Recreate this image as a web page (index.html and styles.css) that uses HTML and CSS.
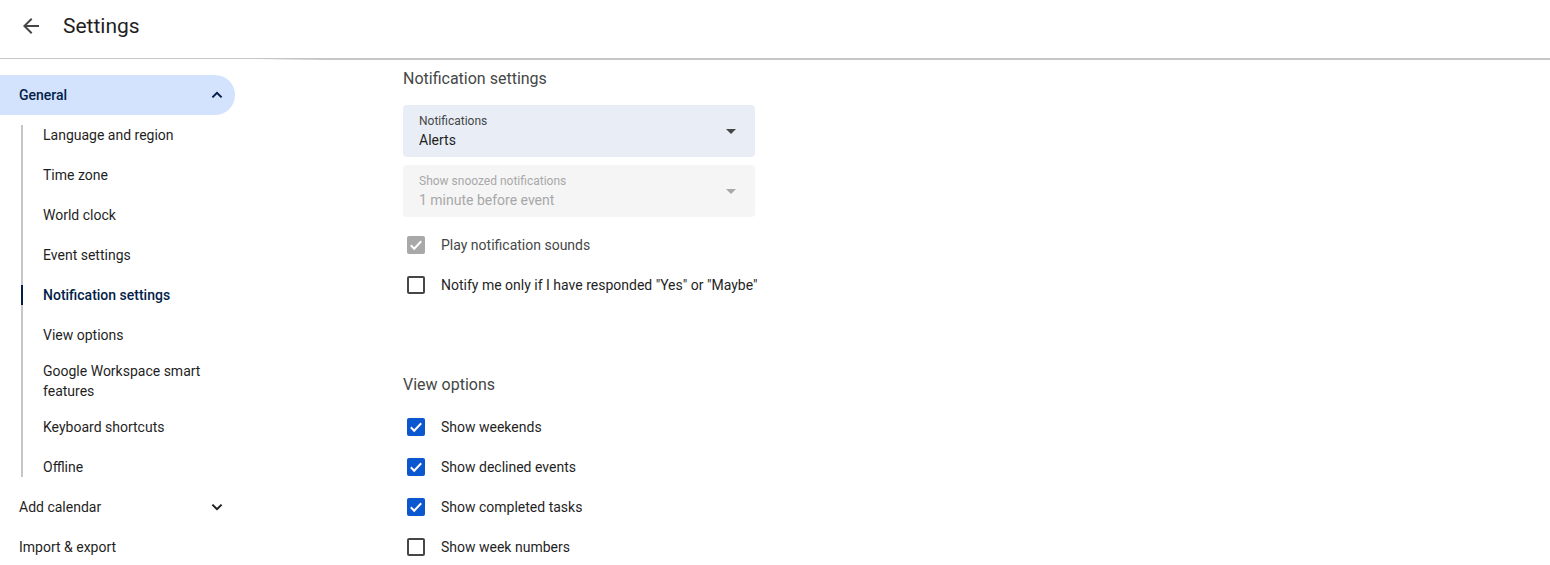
FILE: index.html
```html
<!DOCTYPE html>
<html lang="en">
	<head>
		<meta charset="UTF-8" />
		<meta name="viewport" content="width=device-width, initial-scale=1.0" />
		<title>Settings</title>
		<link rel="stylesheet" href="styles.css">
	</head>
	<body>
		<header class="topbar">
			<button class="back" type="button" aria-label="Go back">
				<svg viewBox="0 0 24 24" width="24" height="24"><path d="M20 11H7.83l5.59-5.59L12 4l-8 8 8 8 1.41-1.41L7.83 13H20v-2z"/></svg>
			</button>
			<h1>Settings</h1>
		</header>
		<div class="divider"></div>

		<div class="layout">
			<nav class="sidebar">
				<button class="section open" type="button" aria-expanded="true">
					General
					<svg viewBox="0 0 20 20" width="20" height="20"><path d="M5.4 12.4l4.6-4.6 4.6 4.6"/></svg>
				</button>
				<ul class="subnav">
					<li><a href="#language">Language and region</a></li>
					<li><a href="#timezone">Time zone</a></li>
					<li><a href="#worldclock">World clock</a></li>
					<li><a href="#events">Event settings</a></li>
					<li><a class="active" href="#notifications">Notification settings</a></li>
					<li><a href="#view">View options</a></li>
					<li><a href="#smart">Google Workspace smart features</a></li>
					<li><a href="#shortcuts">Keyboard shortcuts</a></li>
					<li><a href="#offline">Offline</a></li>
				</ul>
				<button class="section" type="button" aria-expanded="false">
					Add calendar
					<svg viewBox="0 0 20 20" width="20" height="20"><path d="M5.4 7.6l4.6 4.6 4.6-4.6"/></svg>
				</button>
				<a class="section" href="#import">Import &amp; export</a>
			</nav>

			<main class="content">
				<section class="group" id="notifications">
					<h2>Notification settings</h2>
					<div class="fields">
						<div class="field">
							<label for="notify">Notifications</label>
							<select id="notify">
								<option>Alerts</option>
							</select>
							<svg viewBox="0 0 10 5" width="10" height="5"><path d="M0 0h10L5 5z"/></svg>
						</div>
						<div class="field disabled">
							<label for="snooze">Show snoozed notifications</label>
							<select id="snooze" disabled>
								<option>1 minute before event</option>
							</select>
							<svg viewBox="0 0 10 5" width="10" height="5"><path d="M0 0h10L5 5z"/></svg>
						</div>
					</div>
					<label class="check"><input type="checkbox" checked disabled><span>Play notification sounds</span></label>
					<label class="check"><input type="checkbox"><span>Notify me only if I have responded "Yes" or "Maybe"</span></label>
				</section>

				<section class="group" id="view">
					<h2>View options</h2>
					<label class="check"><input type="checkbox" checked><span>Show weekends</span></label>
					<label class="check"><input type="checkbox" checked><span>Show declined events</span></label>
					<label class="check"><input type="checkbox" checked><span>Show completed tasks</span></label>
					<label class="check"><input type="checkbox"><span>Show week numbers</span></label>
				</section>
			</main>
		</div>
	</body>
</html>
```

FILE: styles.css
```css
* {
	box-sizing: border-box;
}
body {
	display: flex;
	flex-direction: column;
	height: 100vh;
	margin: 0;
	background-color: #fff;
	color: #1f1f1f;
	font-family: "Google Sans", Roboto, sans-serif;
	font-size: 14px;
	line-height: 20px;
}
button,
select {
	font: inherit;
	color: inherit;
	cursor: pointer;
}
a {
	color: inherit;
	text-decoration: none;
}

/* Top bar */
.topbar {
	display: flex;
	align-items: center;
	gap: 20px;
	padding: 10px 19px 16px;
}
.back {
	display: flex;
	padding: 0;
	border: none;
	background: none;
	fill: #444746;
}
h1 {
	margin: 0;
	font-size: 21px;
	font-weight: 400;
	line-height: 32px;
}
/* hairline that thickens over the content column */
.divider {
	flex: none;
	height: 2px;
	background:
		linear-gradient(#c4c7c5, #c4c7c5) top / 100% 1px no-repeat,
		linear-gradient(to right, transparent 255px, #c4c7c5 325px) bottom / 100% 1px no-repeat;
}

.layout {
	display: flex;
	flex: 1;
	min-height: 0;
}
.sidebar,
.content {
	overflow-y: auto;
	scrollbar-width: none;
}

/* Sidebar */
.sidebar {
	flex: none;
	width: 235px;
	padding-top: 15px;
}
.section {
	display: flex;
	align-items: center;
	justify-content: space-between;
	width: 100%;
	height: 40px;
	padding: 0 8px 0 19px;
	border: none;
	border-radius: 0 20px 20px 0;
	background: none;
}
.section svg {
	fill: none;
	stroke: currentColor;
	stroke-width: 2;
}
.section.open {
	background-color: #d3e3fd;
	color: #041e49;
	font-weight: 500;
}
.subnav {
	position: relative;
	margin: 0 0 0 21px;
	padding: 0;
	list-style: none;
}
.subnav::before {
	content: "";
	position: absolute;
	top: 10px;
	bottom: 10px;
	left: 0;
	width: 2px;
	background-color: #c4c7c5;
}
.subnav li {
	display: flex;
	align-items: center;
	min-height: 40px;
	padding: 6px 20px 6px 0;
}
.subnav a {
	position: relative;
	padding-left: 22px;
}
.subnav .active {
	color: #041e49;
	font-weight: 500;
}
.subnav .active::before {
	content: "";
	position: absolute;
	top: 0;
	bottom: 0;
	left: 0;
	width: 2px;
	background-color: #041e49;
}

/* Content */
.content {
	flex: 1;
	padding: 7px 24px 0 168px;
}
.group {
	margin-bottom: 68px;
}
.group:last-child {
	margin-bottom: 0;
}
h2 {
	margin: 0 0 10px;
	color: #444746;
	font-size: 16px;
	font-weight: 400;
	line-height: 24px;
}
.fields {
	display: flex;
	flex-direction: column;
	gap: 8px;
	max-width: 352px;
	padding: 4px 0 8px;
}
.field {
	position: relative;
	border-radius: 4px;
	background-color: #e9eef6;
	color: #1f1f1f;
}
.field label {
	position: absolute;
	top: 8px;
	left: 16px;
	color: #444746;
	font-size: 12px;
	line-height: 16px;
	pointer-events: none;
}
.field select {
	display: block;
	width: 100%;
	height: 52px;
	padding: 18px 40px 0 16px;
	border: none;
	appearance: none;
	background: none;
}
.field svg {
	position: absolute;
	top: 24px;
	right: 19px;
	fill: #444746;
	pointer-events: none;
}
.field.disabled {
	background-color: #f5f5f5;
}
.field.disabled label,
.field.disabled select {
	color: #a8a8a8;
	opacity: 1;
}
.field.disabled svg {
	fill: #a8a8a8;
}

/* Checkbox rows */
.check {
	display: flex;
	align-items: center;
	gap: 16px;
	width: fit-content;
	height: 40px;
	padding-left: 4px;
}
.check input {
	width: 18px;
	height: 18px;
	margin: 0;
	border: 2px solid #444746;
	border-radius: 2px;
	appearance: none;
}
.check input:checked {
	border: none;
	background: #0b57d0 url("data:image/svg+xml,%3Csvg xmlns='http://www.w3.org/2000/svg' viewBox='0 0 18 18'%3E%3Cpath d='M3.8 9.3l3.4 3.4 7-7.4' fill='none' stroke='white' stroke-width='2'/%3E%3C/svg%3E");
}
.check input:disabled {
	background-color: #a8a8a8;
}
.check input:disabled + span {
	color: #444746;
}
```
